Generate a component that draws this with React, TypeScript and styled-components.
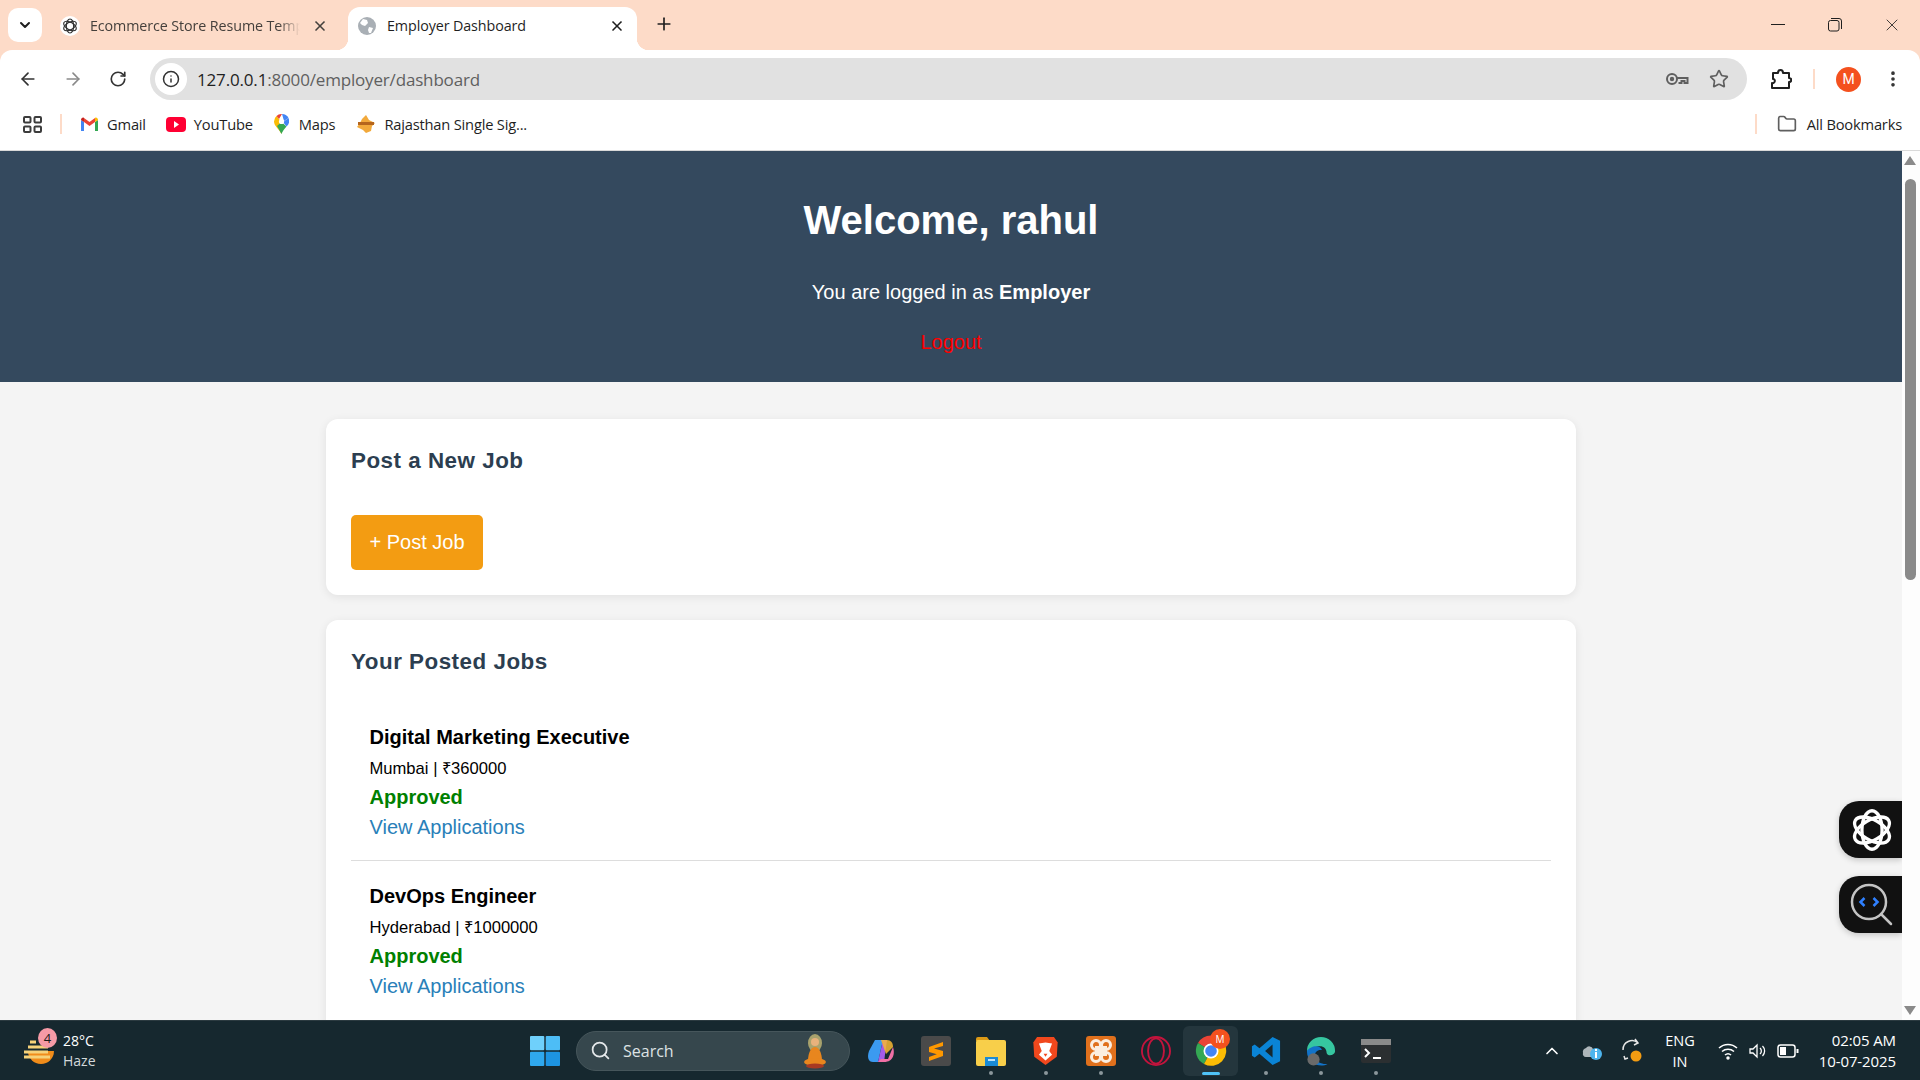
import React from 'react';
import styled, { createGlobalStyle } from 'styled-components';
import { ArrowLeft, ArrowRight, ChevronDown, ChevronUp, Folder, Info, MoreVertical, Plus, RotateCw, Search, Star, X } from 'lucide-react';

const GlobalStyle = createGlobalStyle`
    html, body {
        margin: 0;
        padding: 0;
        height: 100%;
        overflow: hidden;
        font-family: 'Liberation Sans', Arial, sans-serif;
    }
    * { box-sizing: border-box; }
`

const Screen = styled.div`
    width: 1920px;
    height: 1080px;
    display: flex;
    flex-direction: column;
    overflow: hidden;
    position: relative;
    background: #fddbc8;
`

const TabStrip = styled.div`
    height: 50px;
    flex: none;
    background: #fddbc8;
    display: flex;
    align-items: flex-end;
    padding-left: 8px;
    color: #1f1f1f;
    font-family: 'Open Sans', 'Noto Sans', sans-serif;
`

const TabMenu = styled.div`
    width: 34px;
    height: 34px;
    margin-bottom: 8px;
    border-radius: 10px;
    background: #fff;
    display: flex;
    align-items: center;
    justify-content: center;
`

const Tab = styled.div<{ $active?: boolean }>`
    width: ${p => (p.$active ? '289px' : '306px')};
    height: 43px;
    padding: ${p => (p.$active ? '0 12px 6px 10px' : '0 20px 6px 20px')};
    border-radius: 12px 12px 0 0;
    background: ${p => (p.$active ? '#fff' : 'transparent')};
    display: flex;
    align-items: center;
    gap: ${p => (p.$active ? '11px' : '12px')};
    font-size: 14.3px;
    color: ${p => (p.$active ? '#1f1f1f' : '#45403c')};
    white-space: nowrap;
    position: relative;
    ${p => p.$active && `
        &::before, &::after {
            content: '';
            position: absolute;
            bottom: 0;
            width: 12px;
            height: 12px;
        }
        &::before {
            left: -12px;
            background: radial-gradient(circle at 0 0, transparent 12px, #fff 12.5px);
        }
        &::after {
            right: -12px;
            background: radial-gradient(circle at 100% 0, transparent 12px, #fff 12.5px);
        }
    `}
`

const TabTitle = styled.span`
    flex: 1;
    min-width: 0;
    overflow: hidden;
    letter-spacing: -0.1px;
`

const TabTitleFaded = styled(TabTitle)`
    mask-image: linear-gradient(to right, #000 90%, transparent 100%);
`

const FaviconBubble = styled.span`
    width: 20px;
    height: 20px;
    margin: 0 -2px;
    border-radius: 50%;
    background: #fff;
    display: flex;
    align-items: center;
    justify-content: center;
    flex: none;
`

const NewTab = styled.div`
    height: 50px;
    padding: 0 0 2px 17px;
    display: flex;
    align-items: center;
`

const WindowControls = styled.div`
    margin-left: auto;
    height: 50px;
    display: flex;
`

const WindowButton = styled.div`
    width: 57px;
    height: 50px;
    display: flex;
    align-items: center;
    justify-content: center;
`

const Toolbar = styled.div`
    height: 50px;
    flex: none;
    background: #fff;
    border-radius: 12px 12px 0 0;
    display: flex;
    align-items: flex-end;
    padding-left: 5px;
`

const NavButton = styled.div`
    width: 45px;
    height: 42px;
    display: flex;
    align-items: center;
    justify-content: center;
`

const Omnibox = styled.div`
    width: 1597px;
    height: 42px;
    margin-left: 10px;
    background: #e1e1e1;
    border-radius: 21px;
    display: flex;
    align-items: center;
    padding: 0 18px 0 5px;
    font-family: 'Open Sans', 'Noto Sans', sans-serif;
    font-size: 17px;
    letter-spacing: -0.17px;
    color: #1f1f1f;
`

const SiteInfo = styled.div`
    width: 32px;
    height: 32px;
    border-radius: 50%;
    background: #fff;
    display: flex;
    align-items: center;
    justify-content: center;
    margin-right: 10px;
`

const Url = styled.span`
    flex: 1;
`

const UrlRest = styled.span`
    color: #5f5f5f;
`

const OmniIcons = styled.div`
    display: flex;
    align-items: center;
    gap: 20px;
`

const ToolbarRight = styled.div`
    height: 42px;
    display: flex;
    align-items: center;
    padding-left: 23px;
`

const Avatar = styled.div`
    width: 25px;
    height: 25px;
    border-radius: 50%;
    background: #f4511e;
    color: #fff;
    font-family: 'Roboto', sans-serif;
    font-size: 14px;
    display: flex;
    align-items: center;
    justify-content: center;
    margin-left: 21px;
    margin-right: 22px;
`

const Divider = styled.div<{ $height: number; $left: string }>`
    width: 2px;
    flex: none;
    height: ${p => p.$height}px;
    background: #fddbc8;
    margin-left: ${p => p.$left};
`

const BookmarkBar = styled.div`
    height: 51px;
    flex: none;
    background: #fff;
    border-bottom: 1px solid #d9d9d9;
    display: flex;
    align-items: center;
    padding: 0 18px 2px 23px;
    font-family: 'Open Sans', 'Noto Sans', sans-serif;
    font-size: 14.7px;
    letter-spacing: -0.2px;
    color: #1f1f1f;
`

const Bookmark = styled.div<{ $gap?: number; $left?: number }>`
    display: flex;
    align-items: center;
    gap: ${p => p.$gap ?? 8}px;
    margin-left: ${p => p.$left ?? 18}px;
    white-space: nowrap;
`

const PageFrame = styled.div`
    flex: 1;
    min-height: 0;
    display: flex;
`

const Page = styled.main`
    flex: 1;
    min-width: 0;
    background: #f4f4f4;
    color: #000;
    overflow: hidden;
    position: relative;
`

const Header = styled.header`
    height: 231px;
    background: #34495e;
    color: #fff;
    text-align: center;
    padding-top: 46px;
`

const Welcome = styled.h1`
    margin: 0 0 38px;
    font-size: 40px;
    line-height: 46px;
    font-weight: 700;
`

const Role = styled.p`
    margin: 0 0 27px;
    font-size: 20px;
    line-height: 23px;
`

const Logout = styled.a`
    display: block;
    font-size: 20px;
    line-height: 23px;
    color: #ff0000;
`

const Container = styled.div`
    width: 1250px;
    margin: 37px auto 0;
    display: flex;
    flex-direction: column;
    gap: 25px;
`

const Card = styled.section`
    background: #fff;
    border-radius: 12px;
    padding: 25px;
    box-shadow: 0 2px 10px rgba(0, 0, 0, 0.08);
`

const CardTitle = styled.h2`
    margin: 0 0 37px;
    font-size: 22.4px;
    line-height: 34px;
    letter-spacing: 0.5px;
    font-weight: 700;
    color: #2c3e50;
`

const PostButton = styled.a`
    display: inline-block;
    padding: 16px 18.5px;
    background: #f39c12;
    color: #fff;
    font-size: 20px;
    line-height: 23px;
    border-radius: 5px;
`

const JobRow = styled.article<{ $last?: boolean }>`
    padding: 10px 19px 21px 18.5px;
    border-bottom: ${p => (p.$last ? 'none' : '1px solid #ddd')};
    margin-bottom: 14px;
`

const JobTitle = styled.h3`
    margin: 0 0 10px;
    font-size: 20px;
    line-height: 23px;
    font-weight: 700;
`

const JobMeta = styled.div`
    font-size: 16.6px;
    line-height: 19px;
    margin-bottom: 8px;
`

const JobStatus = styled.div`
    font-size: 20px;
    line-height: 23px;
    font-weight: 700;
    color: #008000;
    margin-bottom: 7px;
`

const JobLink = styled.a`
    display: block;
    font-size: 20px;
    line-height: 23px;
    color: #2980b9;
`

const FloatTool = styled.div<{ $top: number }>`
    position: absolute;
    right: 0;
    top: ${p => p.$top}px;
    width: 63px;
    height: 57px;
    background: #111;
    border-radius: 20px 0 0 20px;
    display: flex;
    align-items: center;
    justify-content: center;
    padding-left: 3px;
    box-shadow: 0 2px 6px rgba(0, 0, 0, 0.2);
`

const Scrollbar = styled.div`
    width: 18px;
    flex: none;
    background: #fdfdfd;
    display: flex;
    flex-direction: column;
    align-items: center;
    padding: 5px 2px 0 0;
`

const ScrollArrow = styled.div<{ $down?: boolean }>`
    width: 0;
    height: 0;
    border-left: 6px solid transparent;
    border-right: 6px solid transparent;
    ${p => (p.$down ? 'border-top: 9px solid #8a8a8a;' : 'border-bottom: 9px solid #8a8a8a;')}
    ${p => (p.$down ? 'margin-top: auto; margin-bottom: 5px;' : '')}
`

const ScrollThumb = styled.div`
    width: 11px;
    height: 401px;
    margin-top: 14px;
    border-radius: 6px;
    background: #8a8a8a;
`

const Taskbar = styled.footer`
    height: 60px;
    flex: none;
    background: #16282f;
    border-top: 1px solid #2b3a40;
    display: flex;
    align-items: center;
    color: #fff;
    font-family: 'Open Sans', 'Noto Sans', sans-serif;
    position: relative;
`

const Weather = styled.div`
    width: 517px;
    flex: none;
    display: flex;
    align-items: center;
    gap: 7px;
    padding-left: 22px;
    position: relative;
`

const WeatherText = styled.div`
    font-size: 14px;
    line-height: 20px;
`

const WeatherSub = styled.div`
    color: #d3d8da;
`

const WeatherBadge = styled.span`
    position: absolute;
    left: 38px;
    top: -3px;
    width: 19px;
    height: 20px;
    border-radius: 50%;
    background: #f59aa6;
    color: #1a1a1a;
    font-size: 13px;
    display: flex;
    align-items: center;
    justify-content: center;
`

const TaskSlot = styled.div<{ $active?: boolean; $open?: boolean }>`
    width: 55px;
    height: 50px;
    border-radius: 6px;
    background: ${p => (p.$active ? '#24363d' : 'transparent')};
    display: flex;
    align-items: center;
    justify-content: center;
    position: relative;
    ${p => p.$open && `
        &::after {
            content: '';
            position: absolute;
            bottom: 1px;
            left: 50%;
            margin-left: ${p.$active ? '-9px' : '-2px'};
            width: ${p.$active ? '18px' : '4px'};
            height: ${p.$active ? '3px' : '4px'};
            border-radius: 3px;
            background: ${p.$active ? '#4fc3f7' : '#8b979b'};
        }
    `}
`

const SearchPill = styled.div`
    width: 274px;
    height: 40px;
    border-radius: 20px;
    background: #36474d;
    border: 1px solid #46565b;
    display: flex;
    align-items: center;
    padding: 0 21px 0 13px;
    gap: 12px;
    font-size: 16px;
    color: #dde2e4;
    margin: 0 3px 0 4px;
`

const SearchLabel = styled.span`
    flex: 1;
`

const Tray = styled.div`
    margin-left: auto;
    display: flex;
    align-items: center;
    padding-right: 24px;
`

const TrayItem = styled.div<{ $width: number; $left?: number }>`
    width: ${p => p.$width}px;
    margin-left: ${p => p.$left ?? 0}px;
    display: flex;
    justify-content: center;
    align-items: center;
`

const Lang = styled.div`
    width: 56px;
    text-align: center;
    font-size: 14.5px;
    line-height: 21px;
`

const Clock = styled.div`
    width: 84px;
    margin-left: 8px;
    text-align: right;
    font-size: 15px;
    line-height: 21px;
    letter-spacing: -0.1px;
    white-space: nowrap;
`

const OpenAiMark = ({ size, color }: { size: number; color: string }) => (
    <svg width={size} height={size} viewBox="0 0 48 48" fill="none" stroke={color} strokeWidth="3.6">
        <ellipse cx="24" cy="24" rx="11" ry="21" />
        <ellipse cx="24" cy="24" rx="11" ry="21" transform="rotate(60 24 24)" />
        <ellipse cx="24" cy="24" rx="11" ry="21" transform="rotate(120 24 24)" />
    </svg>
)

const GlobeMark = () => (
    <svg width="18" height="18" viewBox="0 0 18 18">
        <circle cx="9" cy="9" r="9" fill="#a9afb5" />
        <path d="M5 2l4 1 1 3-3 3-3-1-2-2zM11 10l4 1-2 5-2 0-1-3z" fill="#fff" />
    </svg>
)

const GmailMark = () => (
    <svg width="19" height="15" viewBox="0 0 19 15">
        <path d="M1 14V3l3 2v9z" fill="#4285f4" />
        <path d="M15 14V5l3-2v11z" fill="#34a853" />
        <path d="M4 5V1l5.500 4L15 1v4l-5.500 4z" fill="#ea4335" />
        <path d="M1 3c0-2 2-3 3-2v4z" fill="#c5221f" />
        <path d="M18 3c0-2-2-3-3-2v4z" fill="#fbbc04" />
    </svg>
)

const YoutubeMark = () => (
    <svg width="20" height="15" viewBox="0 0 20 15">
        <rect width="20" height="15" rx="4" fill="#ff0033" />
        <path d="M8 4l5 3.500-5 3.500z" fill="#fff" />
    </svg>
)

const MapsMark = () => (
    <svg width="15" height="20" viewBox="0 0 15 20">
        <path d="M7.500 20C5 15 0 12 0 7.500a7.500 7.500 0 0 1 2.500-5.500L7.500 8z" fill="#fbbc04" />
        <path d="M7.500 20c1-3 3-5 5-7.500L7.500 8 3 12z" fill="#34a853" />
        <path d="M2.500 2A7.500 7.500 0 0 1 8 0L5 5z" fill="#ea4335" />
        <path d="M8 0a7.500 7.500 0 0 1 6.500 4L10 7z" fill="#4285f4" />
        <path d="M14.500 4A7.500 7.500 0 0 1 12.500 12.500L9 8z" fill="#4285f4" />
        <circle cx="7.500" cy="7.500" r="2.600" fill="#fff" />
    </svg>
)

const RajasthanMark = () => (
    <svg width="20" height="20" viewBox="0 0 20 20">
        <path d="M10 1l3 5 6 3-3 3-1 5-5 2-3-3-6-3 3-4 2-4z" fill="#f2a93b" />
        <rect x="2" y="8" width="16" height="3" fill="#b5651d" />
    </svg>
)

const KeyMark = () => (
    <svg width="24" height="14" viewBox="0 0 24 14" fill="none" stroke="#5f5f5f" strokeWidth="2">
        <circle cx="7" cy="7" r="5" />
        <circle cx="7" cy="7" r="1.200" fill="#5f5f5f" />
        <path d="M12 6h10.500v5h-3V9h-3v2h-3" />
    </svg>
)

const ExtensionMark = () => (
    <svg width="22" height="22" viewBox="0 0 22 22" fill="none" stroke="#1f1f1f" strokeWidth="2" strokeLinejoin="round">
        <path d="M3 5h5c0-4 5-4 5 0h6v5c3 0 3 4 0 4v6H2v-5c3 1 4-4 1-4z" />
    </svg>
)

const AppsMark = () => (
    <svg width="19" height="17" viewBox="0 0 19 17" fill="none" stroke="#3c3c3c" strokeWidth="2">
        <rect x="1" y="1" width="6.500" height="5.500" rx="1" />
        <rect x="11.500" y="1" width="6.500" height="5.500" rx="1" />
        <rect x="1" y="10.500" width="6.500" height="5.500" rx="1" />
        <rect x="11.500" y="10.500" width="6.500" height="5.500" rx="1" />
    </svg>
)

const RestoreMark = () => (
    <svg width="14" height="14" viewBox="0 0 14 14" fill="none" stroke="#1f1f1f" strokeWidth="1">
        <rect x="0.500" y="2.500" width="10.500" height="10.500" rx="2" />
        <path d="M3 .5h8a2.500 2.500 0 0 1 2.500 2.500v8" />
    </svg>
)

const CodeSearchMark = () => (
    <svg width="44" height="44" viewBox="0 0 44 44" fill="none">
        <circle cx="19" cy="19" r="17" stroke="#c4c4c4" strokeWidth="2.500" />
        <path d="M31 31l10 10" stroke="#c4c4c4" strokeWidth="2.500" strokeLinecap="round" />
        <path d="M14.500 15l-4 4 4 4" stroke="#2f80ff" strokeWidth="2.500" />
        <path d="M23.500 15l4 4-4 4" stroke="#2f80ff" strokeWidth="2.500" />
    </svg>
)

const WeatherMark = () => (
    <svg width="34" height="32" viewBox="0 0 34 32">
        <path d="M6 16h26a13 13 0 0 1-26 0z" fill="#f08c1a" />
        <path d="M2 17h24M6 12h20M2 22h26M8 7h6" stroke="#f5d27a" strokeWidth="3" />
    </svg>
)

const WindowsMark = () => (
    <svg width="30" height="30" viewBox="0 0 30 30">
        <rect width="14.300" height="14.300" rx="1" fill="#6fd0fb" />
        <rect x="15.700" width="14.300" height="14.300" rx="1" fill="#4dbdf6" />
        <rect y="15.700" width="14.300" height="14.300" rx="1" fill="#2fa8ee" />
        <rect x="15.700" y="15.700" width="14.300" height="14.300" rx="1" fill="#1d94e2" />
    </svg>
)

const MonkMark = () => (
    <svg width="26" height="36" viewBox="0 0 26 36">
        <ellipse cx="13" cy="10" rx="7" ry="9" fill="#d8c97a" opacity="0.7" />
        <circle cx="13" cy="9" r="4" fill="#e8b27c" />
        <path d="M6 28c0-8 3-14 7-14s7 6 7 14z" fill="#e8861e" />
        <ellipse cx="13" cy="29" rx="11" ry="4" fill="#e8861e" />
        <ellipse cx="13" cy="33" rx="9" ry="2.500" fill="#a83a22" />
    </svg>
)

const CopilotMark = () => (
    <svg width="28" height="28" viewBox="0 0 28 28">
        <path d="M8 3h8l-5 22H6C1 25 0 20 2 14z" fill="#3b9af0" />
        <path d="M11 25l5-22h4l-3 22z" fill="#a45be8" />
        <path d="M17 25h-6l3-3h7l5-12c2 6 1 15-9 15z" fill="#f06fa5" />
        <path d="M14 3h6c4 0 6 3 6 7l-7 7z" fill="#f7b733" opacity="0.85" />
    </svg>
)

const SublimeMark = () => (
    <svg width="30" height="30" viewBox="0 0 30 30">
        <rect width="30" height="30" rx="3" fill="#4a4a4a" />
        <path d="M22 6L8 11v5l14 4v-5l-9-2.500L22 10zM8 25l14-5v-4L8 21z" fill="#ff9800" />
    </svg>
)

const FilesMark = () => (
    <svg width="30" height="30" viewBox="0 0 30 30">
        <path d="M0 3a2 2 0 0 1 2-2h9l3 4H0z" fill="#dc9a16" />
        <rect y="4" width="30" height="26" rx="2" fill="#f8cf4a" />
        <rect x="9" y="21" width="13" height="9" fill="#1a8ad4" />
        <rect x="12" y="23" width="7" height="2" fill="#bde3fa" />
    </svg>
)

const BraveMark = () => (
    <svg width="27" height="30" viewBox="0 0 28 32">
        <path d="M5 1h18l4 6-1 15-12 9L2 22 1 7z" fill="#f1481d" />
        <path d="M14 7l-7 1 3 8-3 4 7 6 7-6-3-4 3-8z" fill="#fff" />
        <path d="M12 19h4l-2 3z" fill="#f1481d" />
    </svg>
)

const XamppMark = () => (
    <svg width="30" height="30" viewBox="0 0 30 30">
        <rect width="30" height="30" rx="3" fill="#e0701c" />
        <circle cx="10" cy="9" r="4.500" fill="none" stroke="#fbeee0" strokeWidth="3" />
        <circle cx="20" cy="9" r="4.500" fill="none" stroke="#fbeee0" strokeWidth="3" />
        <circle cx="10" cy="21" r="4.500" fill="none" stroke="#fbeee0" strokeWidth="3" />
        <circle cx="20" cy="21" r="4.500" fill="none" stroke="#fbeee0" strokeWidth="3" />
        <rect x="9" y="10" width="12" height="10" fill="#fbeee0" />
    </svg>
)

const OperaMark = () => (
    <svg width="30" height="30" viewBox="0 0 32 32" fill="none" stroke="#c3143d" strokeWidth="2">
        <ellipse cx="16" cy="16" rx="15" ry="15" />
        <ellipse cx="16" cy="16" rx="8.500" ry="13.500" />
    </svg>
)

const ChromeMark = () => (
    <svg width="32" height="32" viewBox="0 0 32 32">
        <path d="M16 16L3 8a15 15 0 0 1 26 0z" fill="#ea4335" />
        <path d="M16 16L3 8a15 15 0 0 0 6 21z" fill="#34a853" />
        <path d="M16 16l13-8a15 15 0 0 1-20 21z" fill="#fbbc04" />
        <circle cx="16" cy="16" r="7.500" fill="#fff" />
        <circle cx="16" cy="16" r="5.800" fill="#4285f4" />
    </svg>
)

const ChromeBadge = styled.span`
    position: absolute;
    right: 8px;
    top: 3px;
    width: 20px;
    height: 20px;
    border-radius: 50%;
    background: #f4511e;
    color: #fff;
    font-size: 10px;
    display: flex;
    align-items: center;
    justify-content: center;
`

const VsCodeMark = () => (
    <svg width="30" height="30" viewBox="0 0 32 32">
        <path d="M23 1l8 4v22l-8 4L9 19l-5 4-3-2V11l3-2 5 4zM23 9l-8 7 8 7z" fill="#0a84d6" fillRule="evenodd" />
    </svg>
)

const EdgeMark = () => (
    <svg width="30" height="30" viewBox="0 0 32 32">
        <path d="M1 16a15 15 0 0 1 30 0c0 5-8 6-9 2 0-5-4-8-9-7-6 1-8 5-12 5z" fill="#36c6a0" />
        <path d="M1 16c3-5 14-8 16-1-6-1-9 4-7 9 2 5 8 6 13 6-8 4-22 0-22-14z" fill="#1273c9" />
        <circle cx="8" cy="25" r="6.500" fill="#6a6a6a" />
    </svg>
)

const TerminalMark = () => (
    <svg width="30" height="24" viewBox="0 0 30 24">
        <rect width="30" height="24" rx="2" fill="#2b2f31" />
        <rect width="30" height="6" fill="#8a8a8a" />
        <path d="M4 10l4 4-4 4" fill="none" stroke="#fff" strokeWidth="2" />
        <path d="M12 19h8" stroke="#fff" strokeWidth="2" />
    </svg>
)

const OneDriveMark = () => (
    <svg width="22" height="20" viewBox="0 0 22 20">
        <path d="M2 12a4 4 0 0 1 3-5 4 4 0 0 1 7 1v8H5a3 3 0 0 1-3-4z" fill="#aeb6ba" />
        <circle cx="15" cy="13" r="6" fill="#4db5ee" />
        <rect x="14" y="11" width="2" height="6" fill="#fff" />
        <rect x="14" y="8" width="2" height="2" fill="#fff" />
    </svg>
)

const SyncMark = () => (
    <svg width="24" height="26" viewBox="0 0 24 26" fill="none" stroke="#e8e8e8" strokeWidth="1.500">
        <path d="M3 12a9 9 0 0 1 15-7M15 1l3 4-4 2M4 18l1 3 3-1" />
        <circle cx="16" cy="18" r="5.500" fill="#f39c12" stroke="none" />
    </svg>
)

const WifiMark = () => (
    <svg width="20" height="18" viewBox="0 0 20 18" fill="none" stroke="#fff" strokeWidth="1.500">
        <path d="M1 6a13 13 0 0 1 18 0M4 9.500a9 9 0 0 1 12 0M7 13a4.500 4.500 0 0 1 6 0" />
        <circle cx="10" cy="16" r="1" fill="#fff" />
    </svg>
)

const VolumeMark = () => (
    <svg width="18" height="18" viewBox="0 0 18 18" fill="none" stroke="#fff" strokeWidth="1.300">
        <path d="M1 7h3l4-4v12l-4-4H1z" />
        <path d="M11 6a4 4 0 0 1 0 6M13.500 4a7 7 0 0 1 0 10" />
    </svg>
)

const BatteryMark = () => (
    <svg width="22" height="14" viewBox="0 0 22 14" fill="none" stroke="#fff" strokeWidth="1.500">
        <rect x="1" y="1" width="17" height="12" rx="2.500" />
        <rect x="3" y="3" width="6" height="8" fill="#fff" stroke="none" />
        <rect x="19.500" y="5" width="2" height="4" fill="#fff" stroke="none" />
    </svg>
)

const jobs = [
    { title: 'Digital Marketing Executive', meta: 'Mumbai | ₹360000' },
    { title: 'DevOps Engineer', meta: 'Hyderabad | ₹1000000' },
]

export default function App() {
    return (
        <Screen>
            <GlobalStyle />
            <TabStrip>
                <TabMenu><ChevronDown size={16} strokeWidth={3} /></TabMenu>
                <Tab>
                    <FaviconBubble><OpenAiMark size={16} color="#333" /></FaviconBubble>
                    <TabTitleFaded>Ecommerce Store Resume Template</TabTitleFaded>
                    <X size={16} strokeWidth={2.5} />
                </Tab>
                <Tab $active>
                    <GlobeMark />
                    <TabTitle>Employer Dashboard</TabTitle>
                    <X size={16} strokeWidth={2.5} />
                </Tab>
                <NewTab><Plus size={20} strokeWidth={2} /></NewTab>
                <WindowControls>
                    <WindowButton><svg width="14" height="2" viewBox="0 0 14 2"><rect width="14" height="1" fill="#1f1f1f" /></svg></WindowButton>
                    <WindowButton><RestoreMark /></WindowButton>
                    <WindowButton><X size={20} strokeWidth={1} /></WindowButton>
                </WindowControls>
            </TabStrip>

            <Toolbar>
                <NavButton><ArrowLeft size={20} color="#333" /></NavButton>
                <NavButton><ArrowRight size={20} color="#8a8a8a" /></NavButton>
                <NavButton><RotateCw size={18} color="#333" strokeWidth={2.2} /></NavButton>
                <Omnibox>
                    <SiteInfo><Info size={18} color="#333" /></SiteInfo>
                    <Url>127.0.0.1<UrlRest>:8000/employer/dashboard</UrlRest></Url>
                    <OmniIcons>
                        <KeyMark />
                        <Star size={20} color="#5f5f5f" strokeWidth={2} />
                    </OmniIcons>
                </Omnibox>
                <ToolbarRight>
                    <ExtensionMark />
                    <Divider $height={20} $left="21px" />
                    <Avatar>M</Avatar>
                    <MoreVertical size={20} color="#333" strokeWidth={2.4} />
                </ToolbarRight>
            </Toolbar>

            <BookmarkBar>
                <AppsMark />
                <Divider $height={20} $left="18px" />
                <Bookmark><GmailMark />Gmail</Bookmark>
                <Bookmark $left={20}><YoutubeMark />YouTube</Bookmark>
                <Bookmark $gap={10} $left={21}><MapsMark />Maps</Bookmark>
                <Bookmark $gap={8} $left={21}><RajasthanMark />Rajasthan Single Sig...</Bookmark>
                <Divider $height={20} $left="auto" />
                <Bookmark $gap={10} $left={20}><Folder size={20} color="#5f5f5f" />All Bookmarks</Bookmark>
            </BookmarkBar>

            <PageFrame>
                <Page>
                    <Header>
                        <Welcome>Welcome, rahul</Welcome>
                        <Role>You are logged in as <strong>Employer</strong></Role>
                        <Logout>Logout</Logout>
                    </Header>
                    <Container>
                        <Card>
                            <CardTitle>Post a New Job</CardTitle>
                            <PostButton>+ Post Job</PostButton>
                        </Card>
                        <Card>
                            <CardTitle>Your Posted Jobs</CardTitle>
                            {jobs.map((job, i) => (
                                <JobRow key={job.title} $last={i === jobs.length - 1}>
                                    <JobTitle>{job.title}</JobTitle>
                                    <JobMeta>{job.meta}</JobMeta>
                                    <JobStatus>Approved</JobStatus>
                                    <JobLink>View Applications</JobLink>
                                </JobRow>
                            ))}
                        </Card>
                    </Container>
                    <FloatTool $top={650}><OpenAiMark size={44} color="#fff" /></FloatTool>
                    <FloatTool $top={725}><CodeSearchMark /></FloatTool>
                </Page>
                <Scrollbar>
                    <ScrollArrow />
                    <ScrollThumb />
                    <ScrollArrow $down />
                </Scrollbar>
            </PageFrame>

            <Taskbar>
                <Weather>
                    <WeatherMark />
                    <WeatherText>
                        <div>28°C</div>
                        <WeatherSub>Haze</WeatherSub>
                    </WeatherText>
                    <WeatherBadge>4</WeatherBadge>
                </Weather>
                <TaskSlot><WindowsMark /></TaskSlot>
                <SearchPill>
                    <Search size={21} color="#e4e8ea" />
                    <SearchLabel>Search</SearchLabel>
                    <MonkMark />
                </SearchPill>
                <TaskSlot><CopilotMark /></TaskSlot>
                <TaskSlot><SublimeMark /></TaskSlot>
                <TaskSlot $open><FilesMark /></TaskSlot>
                <TaskSlot $open><BraveMark /></TaskSlot>
                <TaskSlot $open><XamppMark /></TaskSlot>
                <TaskSlot><OperaMark /></TaskSlot>
                <TaskSlot $active $open><ChromeMark /><ChromeBadge>M</ChromeBadge></TaskSlot>
                <TaskSlot $open><VsCodeMark /></TaskSlot>
                <TaskSlot $open><EdgeMark /></TaskSlot>
                <TaskSlot $open><TerminalMark /></TaskSlot>
                <Tray>
                    <TrayItem $width={40}><ChevronUp size={20} /></TrayItem>
                    <TrayItem $width={40}><OneDriveMark /></TrayItem>
                    <TrayItem $width={40}><SyncMark /></TrayItem>
                    <Lang>ENG<br />IN</Lang>
                    <TrayItem $width={32} $left={4}><WifiMark /></TrayItem>
                    <TrayItem $width={28}><VolumeMark /></TrayItem>
                    <TrayItem $width={32}><BatteryMark /></TrayItem>
                    <Clock>02:05 AM<br />10-07-2025</Clock>
                </Tray>
            </Taskbar>
        </Screen>
    );
}
